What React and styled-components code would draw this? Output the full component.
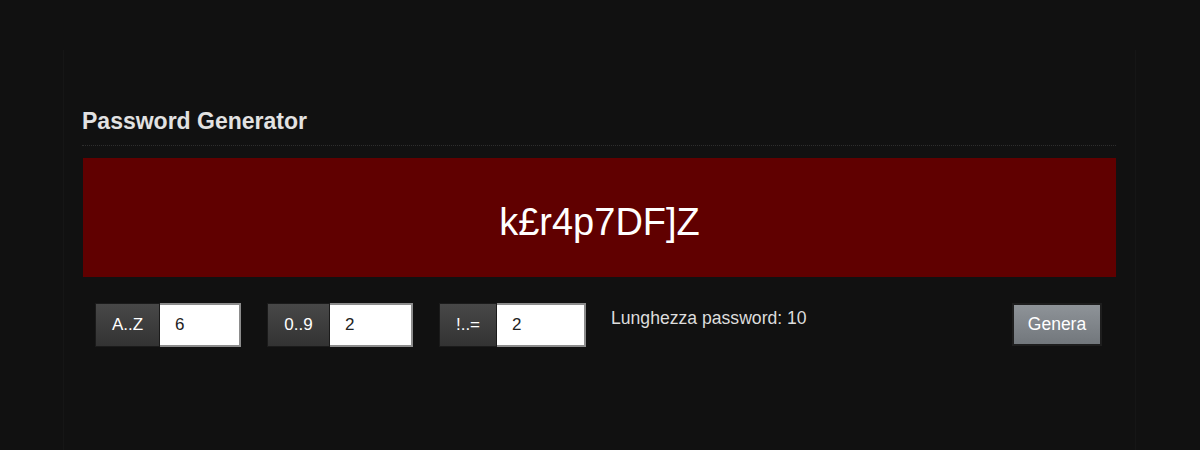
import React from "react";
import styled, { createGlobalStyle } from "styled-components";

const GlobalStyle = createGlobalStyle`
  html, body {
    margin: 0;
    padding: 0;
    background: #111111;
    font-family: "Liberation Sans", Arial, sans-serif;
  }
`;

const groups = [
  { label: "A..Z", value: "6", labelWidth: 65, inputWidth: 81 },
  { label: "0..9", value: "2", labelWidth: 63, inputWidth: 83 },
  { label: "!..=", value: "2", labelWidth: 58, inputWidth: 89 },
];

function App() {
  const total = groups.reduce((sum, g) => sum + Number(g.value), 0);

  return (
    <>
      <GlobalStyle />
      <Panel>
        <Title>Password Generator</Title>
        <Output>k£r4p7DF]Z</Output>
        <Controls>
          {groups.map((g) => (
            <Group key={g.label}>
              <Addon $width={g.labelWidth}>{g.label}</Addon>
              <Field $width={g.inputWidth} defaultValue={g.value} />
            </Group>
          ))}
          <Length>Lunghezza password: {total}</Length>
          <Button>Genera</Button>
        </Controls>
      </Panel>
    </>
  );
}

export default App;

const Panel = styled.div`
  margin: 50px 64px 0 63px;
  min-height: 400px;
  padding: 59px 19px 0 18px;
  border-left: 1px solid #161616;
  border-right: 1px solid #161616;
  box-sizing: border-box;
`;

const Title = styled.h2`
  margin: 0;
  padding-bottom: 11px;
  font-size: 23px;
  line-height: 25px;
  font-weight: bold;
  color: #e2e2e2;
  border-bottom: 1px dotted #2e2e2e;
`;

const Output = styled.div`
  margin-top: 12px;
  margin-left: 1px;
  height: 119px;
  padding-top: 46px;
  box-sizing: border-box;
  background: #600000;
  color: #ffffff;
  font-size: 38px;
  line-height: 36px;
  text-align: center;
`;

const Controls = styled.div`
  display: flex;
  align-items: flex-start;
  margin-top: 26px;
  padding: 0 14px 0 13px;
`;

const Group = styled.div`
  display: flex;
  height: 44px;
  margin-right: 26px;
`;

const Addon = styled.span`
  display: flex;
  align-items: center;
  justify-content: center;
  width: ${(p) => p.$width}px;
  box-sizing: border-box;
  background: linear-gradient(#484848, #333333);
  border: 1px solid #1b1b1b;
  color: #ffffff;
  font-size: 17px;
`;

const Field = styled.input`
  width: ${(p) => p.$width}px;
  box-sizing: border-box;
  margin: 0;
  padding: 0 0 0 15px;
  background: #ffffff;
  border: 2px solid #8c8c8c;
  border-left: none;
  outline: none;
  color: #222222;
  font-family: "Liberation Sans", Arial, sans-serif;
  font-size: 17px;
`;

const Length = styled.span`
  margin-left: -1px;
  padding-top: 5px;
  color: #dddddd;
  font-size: 17.6px;
  line-height: 20px;
`;

const Button = styled.button`
  margin-left: auto;
  width: 90px;
  height: 43px;
  border: 2px solid #1e1e1e;
  background: linear-gradient(#8e9398, #72777c);
  color: #ffffff;
  font-family: "Liberation Sans", Arial, sans-serif;
  font-size: 17.5px;
  cursor: pointer;
`;
